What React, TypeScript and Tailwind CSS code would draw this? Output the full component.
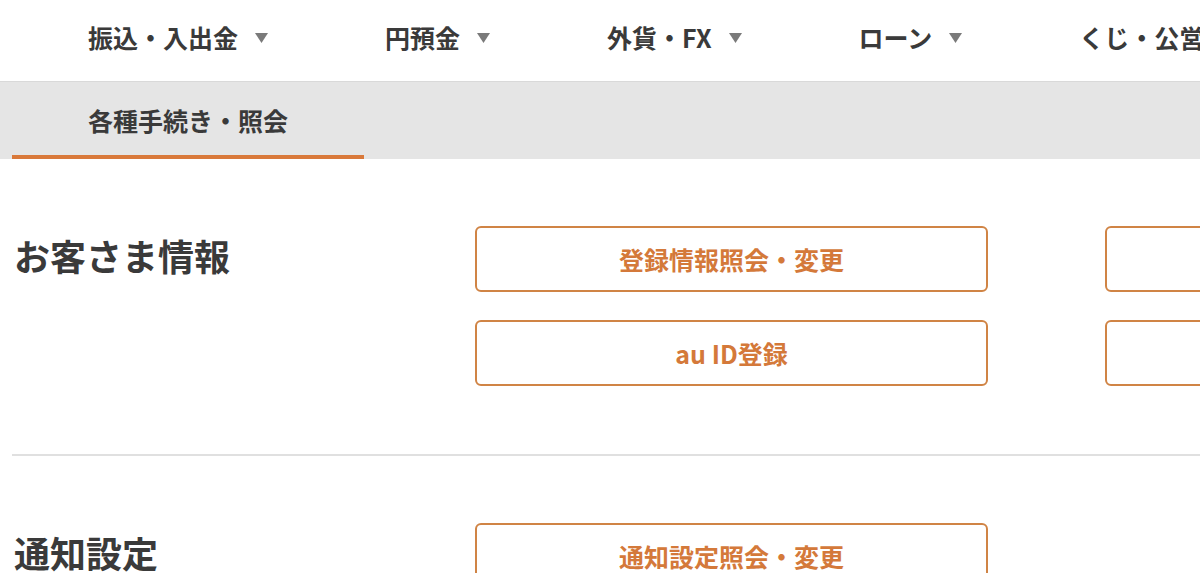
import React from 'react';

const navItems = ['振込・入出金', '円預金', '外貨・FX', 'ローン', 'くじ・公営競技'];

const sections = [
  {
    title: 'お客さま情報',
    buttons: ['登録情報照会・変更', 'パスワード変更', 'au ID登録', 'ログイン履歴照会'],
  },
  {
    title: '通知設定',
    buttons: ['通知設定照会・変更'],
  },
];

function Caret() {
  return (
    <svg width="13" height="10" viewBox="0 0 13 10" className="shrink-0">
      <polygon points="0,0 13,0 6.5,10" fill="#7a7a7a" />
    </svg>
  );
}

function App() {
  return (
    <div
      className="w-[1200px] h-[573px] overflow-hidden bg-white text-[#3a3a3a]"
      style={{ fontFamily: '"Noto Sans CJK JP", "Noto Sans", sans-serif' }}
    >
      {/* global nav */}
      <nav className="h-[82px] border-b border-[#d9d9d9] flex items-center pl-[88px] pb-[6px] gap-[117px] whitespace-nowrap">
        {navItems.map((item) => (
          <div key={item} className="flex items-center gap-[17px] shrink-0">
            <span className="text-[25px] leading-none font-bold">{item}</span>
            <Caret />
          </div>
        ))}
      </nav>

      {/* sub nav */}
      <div className="h-[77px] bg-[#e5e5e5] flex">
        <div className="ml-[12px] w-[352px] h-full border-b-4 border-[#d9793a] flex items-center pl-[76px] pt-[4px]">
          <span className="text-[25px] leading-none font-bold whitespace-nowrap">各種手続き・照会</span>
        </div>
      </div>

      {/* content */}
      <div className="px-[12px]">
        {sections.map((section, i) => (
          <div key={section.title}>
            {i > 0 && <div className="h-[2px] bg-[#e0e0e0] w-[1400px]" />}
            <div className="grid grid-cols-[346px_513px_513px] gap-x-[117px] gap-y-[28px] pt-[67px] pb-[68px]">
              <h2 className="row-span-2 text-[36px] leading-none font-bold pt-[11px] pl-[2px] whitespace-nowrap">
                {section.title}
              </h2>
              {section.buttons.map((label) => (
                <button
                  key={label}
                  className="h-[66px] border-2 border-[#d08445] rounded-[6px] bg-white text-[#d4793a] text-[25px] font-bold leading-none flex items-center justify-center whitespace-nowrap"
                >
                  {label}
                </button>
              ))}
            </div>
          </div>
        ))}
      </div>
    </div>
  );
}

export default App;
